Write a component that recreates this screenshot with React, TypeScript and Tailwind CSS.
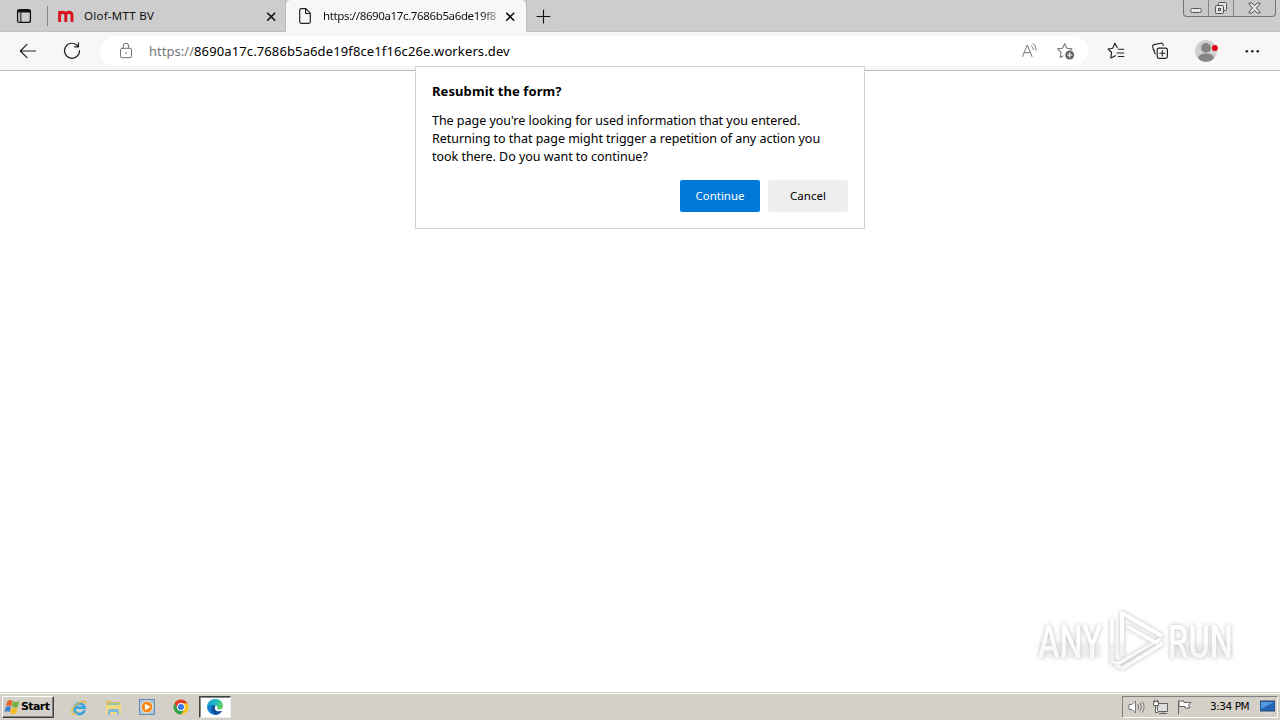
import type { ReactNode } from "react";

const uiFont = "font-['Noto_Sans','Open_Sans',sans-serif]";

function Icon({ size = 20, children }: { size?: number; children: ReactNode }) {
  return (
    <svg
      width={size}
      height={size}
      viewBox={`0 0 ${size} ${size}`}
      fill="none"
      stroke="currentColor"
      strokeLinecap="round"
      strokeLinejoin="round"
      className="block shrink-0"
    >
      {children}
    </svg>
  );
}

function CloseIcon() {
  return (
    <Icon size={10}>
      <path d="M1.7 2.2l7 7M8.7 2.2l-7 7" strokeWidth="1.6" />
    </Icon>
  );
}

function TabBar() {
  return (
    <div className="relative flex h-8 bg-[#cdcdcd] text-[#111]">
      <div className="flex w-12 items-center border-b border-[#c3c3c3] pl-[14px]">
        <Icon>
          <rect x="3.6" y="3.6" width="12.8" height="12.8" rx="2" strokeWidth="1.3" />
          <path d="M4.5 5.2h11" strokeWidth="2.6" />
          <path d="M6.9 7v9" strokeWidth="1" />
          <path d="M5 7.5v8" stroke="#aaa" strokeWidth="1.5" />
        </Icon>
        <span className="ml-[13px] h-5 w-px shrink-0 bg-[#888]" />
      </div>

      {/* Background tab */}
      <div className="flex w-[238px] items-center border-r border-b border-[#bcbcbc] pr-[9px] pl-[9px]">
        <svg width="18" height="12" viewBox="0 0 18 12" className="block shrink-0">
          <path
            d="M2.6 12V1M2.6 5.4c0-4.2 6.2-4.2 6.2 0V12M8.8 5.4c0-4.2 6.2-4.2 6.2 0V12"
            fill="none"
            stroke="#d9141e"
            strokeWidth="2.9"
          />
        </svg>
        <span className="ml-[9px] flex-1 text-[11.5px] leading-4 tracking-[0.25px] whitespace-nowrap">Olof-MTT BV</span>
        <CloseIcon />
      </div>

      {/* Active tab */}
      <div className="flex w-[240px] items-center rounded-t-[5px] bg-[#f7f7f7] pr-[11px] pl-[13px]">
        <svg width="12" height="16" viewBox="0 0 12 16" fill="none" stroke="#222" strokeWidth="1.2" className="shrink-0">
          <path d="M.7 2.2q0-1.5 1.5-1.5h4.6l4.5 4.5v8.6q0 1.5-1.5 1.5H2.2q-1.5 0-1.5-1.5zM6.6 1v4.5h4.5" />
        </svg>
        <span className="ml-3 w-[174px] overflow-hidden [mask-image:linear-gradient(to_right,#000_158px,transparent_182px)] text-[11.5px] leading-4 tracking-[-0.37px] whitespace-nowrap">
          https://8690a17c.7686b5a6de19f8
        </span>
        <span className="ml-2">
          <CloseIcon />
        </span>
      </div>

      <div className="flex w-9 items-center rounded-bl border-b border-l border-[#bfbfbf] pl-2">
        <Icon size={16}>
          <path d="M8.5 2v13M2 8.5h13" strokeWidth="1.1" />
        </Icon>
      </div>
      <div className="flex-1 border-b border-[#c3c3c3]" />

      {/* Window buttons */}
      <div className="absolute top-0 right-1 flex h-[17px] w-[93px] rounded-b border border-t-0 border-[#767676] bg-[#c9c9c9] text-[#555]">
        <div className="flex w-[25px] items-end justify-center border-r border-[#858585] pb-[3px]">
          <span className="h-[5px] w-3 rounded-sm border border-[#555] bg-[#e8e8e8]" />
        </div>
        <div className="flex w-[25px] items-center justify-center border-r border-[#858585]">
          <svg width="14" height="14" viewBox="0 0 14 14" fill="#e3e3e3" stroke="#555">
            <rect x="4.5" y="1.5" width="8" height="8" rx="1" />
            <rect x="1.5" y="4.5" width="8" height="8" rx="1" />
            <rect x="4.5" y="7.5" width="2" height="2" />
          </svg>
        </div>
        <div className="flex flex-1 items-center justify-center">
          <svg width="13" height="12" viewBox="0 0 13 12">
            <path d="M1 1h3l2.5 2.7L9 1h3v1L8.3 6l3.7 4v1H9L6.5 8.3 4 11H1v-1l3.7-4L1 2z" fill="#e3e3e3" stroke="#555" />
          </svg>
        </div>
      </div>
    </div>
  );
}

function Toolbar() {
  return (
    <div className="flex h-[39px] items-center border-b border-[#bdbdbd] bg-[#f7f7f7] pl-[18px] text-[#222]">
      <Icon>
        <path d="M17.5 10h-15M9 3.3L2.3 10 9 16.7" strokeWidth="1.2" />
      </Icon>
      <span className="ml-6">
        <Icon>
          <path d="M15.8 5A7.5 7.5 0 1 0 17.5 9.7M16.5 1.8v4h-4" strokeWidth="1.2" />
        </Icon>
      </span>
      <div className="ml-[18px] flex h-[30px] w-[988px] items-center rounded-full bg-white pl-4">
        <span className="text-[#707070]">
          <Icon>
            <rect x="4.5" y="7.3" width="11" height="9.4" rx="1.6" />
            <path d="M7.3 7V5a2.7 2.7 0 0 1 5.4 0v2" />
            <circle cx="10" cy="12" r=".8" fill="currentColor" stroke="none" />
          </Icon>
        </span>
        <span className="ml-[13px] flex-1 text-[13px] leading-5 tracking-[0.12px] whitespace-nowrap text-black">
          <span className="tracking-[0.03px] text-[#767676]">https://</span>8690a17c.7686b5a6de19f8ce1f16c26e.workers.dev
        </span>
        <div className="flex gap-4 pr-3 text-[#777]">
          <Icon>
            <path d="M2.5 15.5L7.3 4l4.7 11.5M4.2 11.7h6.2M11.5 4.6q1.8 1.3 1.8 3.9M13.2 2.4q3 2.2 3 6.7" />
          </Icon>
          <Icon>
            <path d="M7 15l-2.8 1.4.8-5-3.5-3.5 4.9-.7 2.3-4.5L11 7.2l4.9.7-1 1" strokeWidth="1.1" />
            <circle cx="13.7" cy="14" r="4.5" fill="#666" stroke="none" />
            <path d="M13.7 11.8v4.4M11.5 14h4.4" stroke="#fff" />
          </Icon>
        </div>
      </div>
      <span className="ml-[18px]">
        <Icon>
          <path d="M11.3 6.7L8.9 2.3 6.7 7.2 2.1 8l3.5 3.5-.8 5.4 4.6-2.2M12.4 8.2h5.4M11 12h6.8M12.4 15.5h5.4" strokeWidth="1.15" />
        </Icon>
      </span>
      <span className="ml-6">
        <Icon>
          <rect x="7.2" y="7.2" width="10.2" height="10.2" rx="1.8" strokeWidth="1.2" />
          <path d="M12.3 9.6V15M9.6 12.3H15M5.2 13L3.5 8.8M13.3 4.4L12.6 2.8Q12.1 2 11 2.2l-7 1.4Q2.3 4 2.6 5.6l.6 2.2Q3.5 9 4.5 9.3" strokeWidth="1.1" />
        </Icon>
      </span>
      <svg width="24" height="24" viewBox="0 0 24 24" className="ml-6 shrink-0">
        <defs>
          <clipPath id="avatar">
            <circle cx="12" cy="12" r="11" />
          </clipPath>
        </defs>
        <g clipPath="url(#avatar)">
          <rect width="24" height="24" fill="#d0d0ce" />
          <circle cx="12" cy="8.9" r="4.9" fill="#858585" />
          <ellipse cx="12" cy="18.7" rx="7.8" ry="4.1" fill="#858585" />
        </g>
        <circle cx="20.9" cy="8.9" r="3" fill="#e0001b" />
      </svg>
      <span className="ml-6">
        <Icon>
          <g fill="currentColor" stroke="none">
            <circle cx="4.8" cy="10.2" r="1.3" />
            <circle cx="10.3" cy="10.2" r="1.3" />
            <circle cx="15.8" cy="10.2" r="1.3" />
          </g>
        </Icon>
      </span>
    </div>
  );
}

function ResubmitDialog() {
  return (
    <div className="absolute top-[66px] left-[415px] h-[163px] w-[450px] border border-[#d1d1d1] bg-white px-4 pt-[15px] text-black">
      <h1 className="text-[13px] leading-[18px] font-bold tracking-[0.08px] whitespace-nowrap">Resubmit the form?</h1>
      <p className="mt-3 text-[12.5px] leading-[18px] tracking-[-0.03px] whitespace-nowrap">
        The page you're looking for used information that you entered.
        <br />
        Returning to that page might trigger a repetition of any action you
        <br />
        took there. Do you want to continue?
      </p>
      <div className="mt-[14px] flex justify-end gap-2 text-[11.5px]">
        <button className="h-8 w-20 rounded-xs bg-[#0078d7] text-white">Continue</button>
        <button className="h-8 w-20 rounded-xs bg-[#eeeeee]">Cancel</button>
      </div>
    </div>
  );
}

function Watermark() {
  return (
    <div className="absolute top-[606px] left-[1035px] flex h-[68px] w-[201px] items-center text-white drop-shadow-[0_0_2px_#bbb]">
      <svg width="201" height="68" viewBox="0 0 201 68" className="overflow-visible">
        <g fontFamily="Roboto" fontSize="46" fontWeight="500" fill="#fff">
          <text x="3" y="52" textLength="64" lengthAdjust="spacingAndGlyphs">ANY</text>
          <text x="133" y="52" textLength="65" lengthAdjust="spacingAndGlyphs">RUN</text>
        </g>
        <g fill="none" stroke="#fff" strokeWidth="4" strokeLinejoin="round">
          <path d="M87 50V7l40 23" />
          <path d="M77 12v44l6 2 43-25M92 20l31 18" strokeWidth="3.5" />
          <path d="M128 37L87 62l-6-3" strokeWidth="4" />
        </g>
        <path
          d="M75 37h4v19l4 2 35-21h8L87 63l-12-6zM85 37h4v13h-4z"
          fill="#ccc"
          opacity=".25"
        />
        <path d="M4 37h62v15H4zM134 37h63v15h-63z" fill="#ddd" opacity=".18" />
      </svg>
    </div>
  );
}

function ChromeLogo() {
  return (
    <svg width="16" height="16" viewBox="0 0 16 16">
      <circle cx="8" cy="8" r="7.5" fill="#f9c51d" />
      <path d="M1.5 4.2A7.5 7.5 0 0 1 14.5 4.3H8L4.8 9.8z" fill="#e33b2e" />
      <path d="M1.5 4.2L4.8 9.8 8 11.6h3L7.7 15.5A7.5 7.5 0 0 1 1.5 4.2" fill="#2fa34f" />
      <circle cx="8" cy="8" r="3.9" fill="#fff" />
      <circle cx="8" cy="8" r="3" fill="#3978e7" />
    </svg>
  );
}

function EdgeLogo() {
  return (
    <svg width="18" height="18" viewBox="0 0 18 18">
      <defs>
        <linearGradient id="edge" x1="0" y1="0" x2="1" y2=".4">
          <stop stopColor="#1591d4" />
          <stop offset=".6" stopColor="#25bec3" />
          <stop offset="1" stopColor="#5fce62" />
        </linearGradient>
      </defs>
      <path d="M1 9.5C1 5 8 4.8 10 7.5c-3 1.5-1.5 5.5 1.5 6 1.8.3 3.4-.4 4.4-.8C13.8 16 11.7 17 9 17a8 8 0 0 1-8-7.5" fill="#1680d0" />
      <path d="M6 9c-2 4 .7 8 5 7.6 2.3-.5 3.9-1.9 4.9-3.9-5 2.3-8.4-.8-6.6-4.6C8 7 6.8 7.6 6 9" fill="#124e9a" />
      <path d="M1 9.2C1-1.5 17-1.4 17 8c0 3.3-3.3 4.2-6 3 .9-1.3.5-3.9-3.4-4.2C4 6.5 1.4 7.8 1 9.2" fill="url(#edge)" />
    </svg>
  );
}

function Taskbar() {
  return (
    <div className="flex h-[28px] items-center border-t border-[#d4d0c8] bg-[#d4d0c8] pt-px shadow-[inset_0_1px_0_#fff]">
      <button className="ml-0.5 flex h-[22px] w-[52px] items-center border border-t-white border-r-[#404040] border-b-[#404040] border-l-white pl-px text-black shadow-[inset_-1px_-1px_0_#808080]">
        <svg width="16" height="16" viewBox="0 0 16 16" className="shrink-0">
          <path d="M3.5 2q2.7-2 5 0L7.2 7.3Q4.8 5.5 2 7.3z" fill="#e8622c" />
          <path d="M9 2.3q3 1.6 6.3-.2L13.9 8q-3 1.5-6.1-.4z" fill="#74b243" />
          <path d="M1.7 8q2.9-1.7 5.3.1l-1.3 5.2Q3.2 11.5.3 13.2z" fill="#3e83d0" />
          <path d="M7.6 8.5q3 1.7 6.1.2l-1.4 5.6q-3 1.5-6.1-.2z" fill="#f5bc26" />
        </svg>
        <span className="ml-px text-[11px] font-bold tracking-[-0.6px] font-['DejaVu_Sans',sans-serif]">Start</span>
      </button>
      <div className="ml-[17px] flex items-center gap-[17px]">
        {/* Internet Explorer */}
        <svg width="17" height="17" viewBox="0 0 17 17" fill="none">
          <path d="M13.7 11.2A5.3 5.3 0 1 1 13.8 8.7H4" stroke="#39a4df" strokeWidth="2.7" />
          <path d="M14.5 5C17-2.5-1 7 1 14c1 2.5 5 .2 5 .2" stroke="#e9b73f" strokeWidth="1.3" />
        </svg>
        {/* Explorer */}
        <svg width="17" height="17" viewBox="0 0 17 17">
          <path d="M1 2h5l1 1h8v11H1z" fill="#dfbd5c" />
          <path d="M3 4h11v5H3z" fill="#8fc8b5" />
          <path d="M1 6h15v9H1z" fill="#f0d983" />
          <path d="M3 16v-4q0-2 2-2h7q2 0 2 2v4h-2v-3H5v3z" fill="#7cb9d9" />
        </svg>
        {/* Media player */}
        <svg width="17" height="17" viewBox="0 0 17 17">
          <rect x=".5" y=".5" width="15" height="15" fill="#a8c5df" stroke="#638db3" />
          <circle cx="8" cy="8" r="5.9" fill="#f28816" stroke="#fff" strokeWidth=".7" />
          <path d="M6 4.7v6.6L11.6 8z" fill="#fff" />
        </svg>
        <ChromeLogo />
      </div>
      <div className="ml-[10px] flex h-[22px] w-[32px] items-center justify-center border border-t-[#404040] border-r-[#eee] border-b-[#eee] border-l-[#404040] bg-white shadow-[inset_1px_1px_0_#888]">
        <EdgeLogo />
      </div>

      {/* Notification area */}
      <div className="mr-0.5 ml-auto flex h-[22px] w-[156px] items-center border border-t-[#808080] border-r-white border-b-white border-l-[#808080] pl-[5px]">
        <svg width="18" height="16" viewBox="0 0 18 16" fill="none" stroke="#777">
          <path d="M1 5.5h3L7.5 2v12L4 10.5H1z" fill="#fff" />
          <path d="M9.8 5.2q1.6 2.8 0 5.6M12 3.7q2.7 4.3 0 8.6M14.3 2.5q3.6 5.5 0 11" />
        </svg>
        <svg width="18" height="16" viewBox="0 0 18 16" fill="none" stroke="#626262" className="ml-[6px]">
          <path d="M5.5 4.5h10v8h-10zM7 14.5h8M11 13v1" fill="#ddd" />
          <path d="M2.5.5v3M5.5.5v3M1.5 2.5h5v4h-5zM3.5 7v6.5H6" fill="#fff" />
        </svg>
        <svg width="17" height="16" viewBox="0 0 17 16" stroke="#666" className="ml-[6px]">
          <path d="M2.5 1.5v14" />
          <path d="M3 2h5v1.5h7L12.5 6 14 9H9V7.5H3z" fill="#fff" />
        </svg>
        <span className="ml-[17px] w-[41px] text-[10.5px] tracking-[-0.45px] whitespace-nowrap text-black font-['DejaVu_Sans',sans-serif]">
          3:34 PM
        </span>
        <svg width="15" height="14" viewBox="0 0 15 14" className="ml-[9px] shrink-0">
          <path d="M0 1h15v10H0z" fill="#2364b5" stroke="#254973" />
          <path d="M1 2h13L1 9z" fill="#5697da" />
          <path d="M3 13h9" stroke="#ddd" />
        </svg>
      </div>
    </div>
  );
}

export default function App() {
  return (
    <div className={`relative flex h-[720px] w-[1280px] flex-col overflow-hidden bg-white ${uiFont}`}>
      <TabBar />
      <Toolbar />
      <main className="flex-1" />
      <Taskbar />
      <ResubmitDialog />
      <Watermark />
    </div>
  );
}
